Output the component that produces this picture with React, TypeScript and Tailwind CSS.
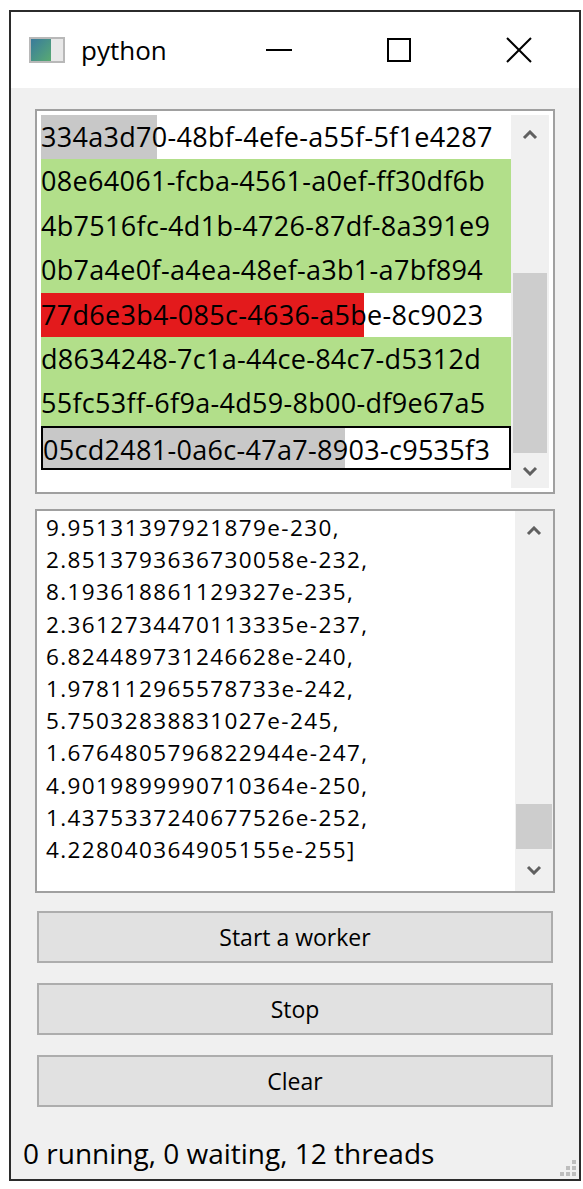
import React from "react";

const F = { fontFamily: '"Open Sans", "Noto Sans", sans-serif' };

const rows: { t: string; bg: string; hl?: number; hlc?: string; box?: boolean }[] = [
  { t: "334a3d70-48bf-4efe-a55f-5f1e4287", bg: "#ffffff", hl: 116, hlc: "#c8c8c8" },
  { t: "08e64061-fcba-4561-a0ef-ff30df6b", bg: "#b2df8a" },
  { t: "4b7516fc-4d1b-4726-87df-8a391e9", bg: "#b2df8a" },
  { t: "0b7a4e0f-a4ea-48ef-a3b1-a7bf894", bg: "#b2df8a" },
  { t: "77d6e3b4-085c-4636-a5be-8c9023", bg: "#ffffff", hl: 323, hlc: "#e31a1c" },
  { t: "d8634248-7c1a-44ce-84c7-d5312d", bg: "#b2df8a" },
  { t: "55fc53ff-6f9a-4d59-8b00-df9e67a5", bg: "#b2df8a" },
  { t: "05cd2481-0a6c-47a7-8903-c9535f3", bg: "#ffffff", hl: 302, hlc: "#c8c8c8", box: true },
];

const nums = [
  "9.95131397921879e-230,",
  "2.8513793636730058e-232,",
  "8.193618861129327e-235,",
  "2.3612734470113335e-237,",
  "6.824489731246628e-240,",
  "1.978112965578733e-242,",
  "5.75032838831027e-245,",
  "1.6764805796822944e-247,",
  "4.9019899990710364e-250,",
  "1.4375337240677526e-252,",
  "4.228040364905155e-255]",
];

const Up = () => (
  <svg width="16" height="10" viewBox="0 0 16 10"><path d="M2 8 L8 2 L14 8" fill="none" stroke="#606060" strokeWidth="3" /></svg>
);
const Down = () => (
  <svg width="16" height="10" viewBox="0 0 16 10"><path d="M2 2 L8 8 L14 2" fill="none" stroke="#606060" strokeWidth="3" /></svg>
);

export default function App() {
  return (
    <div className="w-[583px] h-[1189px] bg-white pt-[10px] pl-[9px]" style={F}>
      <div className="w-[572px] h-[1171px] border-2 border-[#2b2b2b] flex flex-col bg-[#f0f0f0]">
        <div className="h-[76px] bg-white flex items-center shrink-0">
          <div className="ml-[18px] w-[36px] h-[26px] border-2 border-[#b8b8b8] bg-[#e8e8e8] flex">
            <div className="w-[20px] h-full bg-gradient-to-br from-[#3a7a9a] to-[#5aaa70]" />
          </div>
          <span className="ml-[16px] text-[26px] text-black">python</span>
          <div className="ml-auto flex items-center">
            <div className="w-[120px] flex justify-center"><div className="w-[26px] h-[2px] bg-black" /></div>
            <div className="w-[120px] flex justify-center"><div className="w-[24px] h-[24px] border-2 border-black" /></div>
            <div className="w-[120px] flex justify-center">
              <svg width="26" height="26" viewBox="0 0 26 26"><path d="M1 1 L25 25 M25 1 L1 25" stroke="black" strokeWidth="2" /></svg>
            </div>
          </div>
        </div>
        <div className="flex-1 flex flex-col px-[24px] pt-[21px]">
          <div className="h-[385px] border-2 border-[#a0a0a0] bg-white flex p-[4px] pr-[4px]">
            <div className="flex-1 overflow-hidden">
              {rows.map((r, i) => (
                <div key={i} className={`relative h-[44.4px] whitespace-nowrap text-[27px] tracking-[0.3px] leading-[44px] text-black overflow-hidden ${r.box ? "border-2 border-black leading-[40px]" : ""}`} style={{ background: r.bg }}>
                  {r.hl && <div className="absolute left-0 top-0 bottom-0" style={{ width: r.hl, background: r.hlc }} />}
                  <span className="relative">{r.t}</span>
                </div>
              ))}
            </div>
            <div className="w-[38px] bg-[#f0f0f0] flex flex-col items-center">
              <div className="h-[40px] flex items-center"><Up /></div>
              <div className="h-[118px]" />
              <div className="w-[34px] h-[180px] bg-[#cdcdcd]" />
              <div className="flex-1 flex items-center"><Down /></div>
            </div>
          </div>
          <div className="mt-[15px] h-[384px] border-2 border-[#a0a0a0] bg-white flex">
            <div className="flex-1 pl-[9px] pt-[1px] text-[22.5px] tracking-[1.4px] leading-[32.2px] text-black">
              {nums.map((n) => <div key={n}>{n}</div>)}
            </div>
            <div className="w-[38px] bg-[#f0f0f0] flex flex-col items-center">
              <div className="h-[40px] flex items-center"><Up /></div>
              <div className="h-[253px]" />
              <div className="w-[36px] h-[45px] bg-[#cdcdcd]" />
              <div className="flex-1 flex items-center"><Down /></div>
            </div>
          </div>
          {["Start a worker", "Stop", "Clear"].map((b, i) => (
            <div key={b} className={`${i === 0 ? "mt-[18px]" : "mt-[20px]"} mx-[2px] h-[52px] border-2 border-[#adadad] bg-[#e1e1e1] flex items-center justify-center text-[23px] text-black`}>{b}</div>
          ))}
        </div>
        <div className="h-[50px] flex items-center pl-[12px] pb-[2px] relative">
          <span className="text-[28px] text-black">0 running, 0 waiting, 12 threads</span>
          <svg className="absolute right-[2px] bottom-[2px]" width="20" height="20" viewBox="0 0 20 20" fill="#bdbdbd">
            <rect x="15" y="3" width="4" height="4" /><rect x="9" y="9" width="4" height="4" /><rect x="15" y="9" width="4" height="4" />
            <rect x="3" y="15" width="4" height="4" /><rect x="9" y="15" width="4" height="4" /><rect x="15" y="15" width="4" height="4" />
          </svg>
        </div>
      </div>
    </div>
  );
}
